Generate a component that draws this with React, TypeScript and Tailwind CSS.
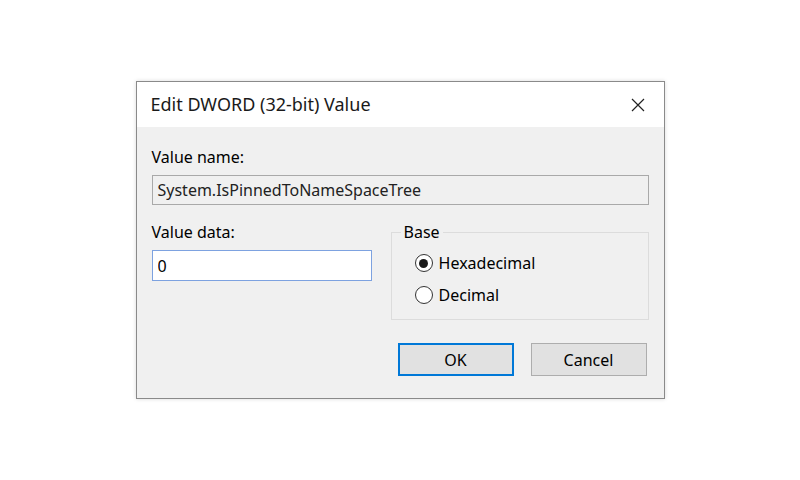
import { useState } from 'react'

function Radio({ label, checked, onSelect }: { label: string; checked: boolean; onSelect: () => void }) {
  return (
    <button type="button" onClick={onSelect} className="flex items-center h-[22px] text-left">
      <span className="flex items-center justify-center w-[18px] h-[18px] rounded-full border border-[#333] bg-white">
        {checked && <span className="w-[9px] h-[9px] rounded-full bg-[#1a1a1a]" />}
      </span>
      <span className="ml-[6px]">{label}</span>
    </button>
  )
}

export default function App() {
  const [base, setBase] = useState<'hex' | 'dec'>('hex')
  const [data, setData] = useState('0')

  return (
    <div
      className="w-[800px] h-[480px] bg-white flex items-center justify-center text-[16px] text-black"
      style={{ fontFamily: '"Noto Sans", "Liberation Sans", sans-serif' }}
    >
      <div className="w-[529px] h-[318px] border border-[#8a8a8a] flex flex-col shadow-[0_0_4px_rgba(0,0,0,0.15)]">
        {/* title bar */}
        <div className="h-[45px] bg-white flex items-center justify-between pl-[14px] pr-[18px]">
          <span className="text-[18px] text-[#1a1a1a]">Edit DWORD (32-bit) Value</span>
          <svg width="14" height="14" viewBox="0 0 14 14" className="mr-[1px]">
            <path d="M1 1 L13 13 M13 1 L1 13" stroke="#222" strokeWidth="1.2" />
          </svg>
        </div>

        {/* body */}
        <div className="flex-1 bg-[#f0f0f0] pl-[15px] pr-[15px] pt-[20px]">
          <div className="leading-[20px]">Value name:</div>
          <div className="mt-[8px] h-[30px] border border-[#a9a9a9] bg-[#f0f0f0] flex items-center px-[5px] text-[#222]">
            System.IsPinnedToNameSpaceTree
          </div>

          <div className="mt-[17px] flex gap-[19px]">
            <div className="w-[221px]">
              <div className="leading-[20px]">Value data:</div>
              <input
                className="mt-[8px] w-full h-[31px] border border-[#7da2e0] bg-white px-[5px] outline-none"
                value={data}
                onChange={e => setData(e.target.value)}
              />
            </div>
            <fieldset className="w-[259px] h-[98px] border border-[#dcdcdc]">
              <legend className="ml-[9px] px-[3px] leading-[20px]">Base</legend>
              <div className="flex flex-col gap-[10px] mt-[10px] pl-[23px]">
                <Radio label="Hexadecimal" checked={base === 'hex'} onSelect={() => setBase('hex')} />
                <Radio label="Decimal" checked={base === 'dec'} onSelect={() => setBase('dec')} />
              </div>
            </fieldset>
          </div>

          <div className="mt-[23px] flex justify-end gap-[17px] pr-[2px]">
            <button className="w-[116px] h-[33px] bg-[#e1e1e1] border-2 border-[#0078d7]">OK</button>
            <button className="w-[116px] h-[33px] bg-[#e1e1e1] border border-[#adadad]">Cancel</button>
          </div>
        </div>
      </div>
    </div>
  )
}
